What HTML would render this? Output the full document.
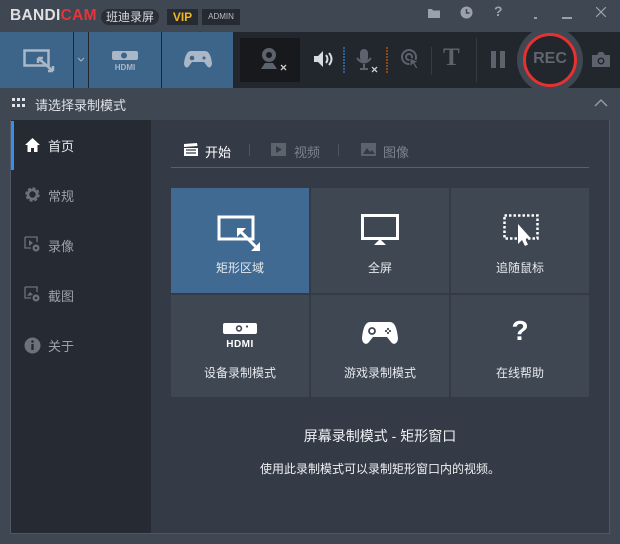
<!DOCTYPE html>
<html><head><meta charset="utf-8"><style>
*{margin:0;padding:0;box-sizing:border-box}
body{width:620px;height:544px;background:#3f4753;font-family:"Liberation Sans","Noto Sans CJK SC",sans-serif;position:relative;overflow:hidden;color:#fff}
.a{position:absolute}
.t{font-size:12px;color:#e8ebef;white-space:nowrap}
.side .t{color:#9aa1aa;font-size:13px}
.tile{position:absolute;background:#3f4753;width:138px}
.tile .lbl{position:absolute;left:0;right:0;text-align:center;top:71px;font-size:12px;color:#e6e9ee}
.tile svg{position:absolute;left:50%;transform:translateX(-50%);top:26px}
</style></head><body>
<!-- title bar -->
<div class="a" style="left:10px;top:7px;font-weight:bold;font-size:15.5px;letter-spacing:0.3px;color:#e0e0e0">BANDI<span style="color:#e8333a">CAM</span></div>
<div class="a" style="left:101px;top:9px;width:58px;height:16px;border-radius:8px;background:#2a2f37;font-size:12px;line-height:16px;text-align:center;color:#d8dbe0">班迪录屏</div>
<div class="a" style="left:167px;top:9px;width:31px;height:16px;background:#262b32;color:#f5b61a;font-weight:bold;font-size:12px;line-height:16px;text-align:center">VIP</div>
<div class="a" style="left:202px;top:9px;width:38px;height:16px;background:#262b32;color:#b8bdc4;font-size:8px;line-height:16px;text-align:center">ADMIN</div>
<svg class="a" style="left:427px;top:7px" width="14" height="12"><path d="M1 2h4l1 1.5h7V11H1z" fill="#9aa1aa"/></svg>
<svg class="a" style="left:460px;top:6px" width="13" height="13"><circle cx="6.5" cy="6.5" r="6" fill="#9aa1aa"/><path d="M6.5 3v4h3" stroke="#3f4753" stroke-width="1.5" fill="none"/></svg>
<div class="a" style="left:494px;top:3px;font-weight:bold;font-size:14px;color:#9aa1aa">?</div>
<div class="a" style="left:534px;top:17px;width:3px;height:2px;background:#9aa1aa"></div>
<div class="a" style="left:562px;top:17px;width:10px;height:2px;background:#9aa1aa"></div>
<svg class="a" style="left:596px;top:7px" width="10" height="10"><path d="M0 0L10 10M10 0L0 10" stroke="#9aa1aa" stroke-width="1.2"/></svg>
<!-- toolbar -->
<div class="a" style="left:0;top:32px;width:620px;height:56px;background:#22272e"></div>
<div class="a" style="left:0;top:32px;width:73px;height:56px;background:#3d6489"></div>
<div class="a" style="left:74px;top:32px;width:14px;height:56px;background:#3d6489"></div>
<div class="a" style="left:89px;top:32px;width:72px;height:56px;background:#3d6489"></div>
<div class="a" style="left:162px;top:32px;width:71px;height:56px;background:#3d6489"></div>
<svg class="a" style="left:23px;top:49px" width="33" height="24"><rect x="1.5" y="1.5" width="24" height="15" fill="none" stroke="#a9b7c7" stroke-width="2.5"/><path d="M15 9L30 22M15 9h5M15 9v5M30 22h-5M30 22v-5" stroke="#a9b7c7" stroke-width="2.5" fill="none"/></svg>
<svg class="a" style="left:77px;top:57px" width="8" height="5"><path d="M1 1l3 3 3-3" stroke="#a9b7c7" fill="none"/></svg>
<svg class="a" style="left:111px;top:49px" width="28" height="22"><rect x="1" y="2" width="26" height="9" rx="2" fill="#a9b7c7"/><circle cx="13" cy="6.5" r="3" fill="#3d6489"/><text x="14" y="21" text-anchor="middle" font-size="8" font-weight="bold" fill="#a9b7c7" font-family="Liberation Sans">HDMI</text></svg>
<svg class="a" style="left:184px;top:50px" width="28" height="19"><path d="M7 1h14c4 0 6 5 7 12 0 4-3 6-5 3l-3-4H8l-3 4c-2 3-5 1-5-3C1 6 3 1 7 1z" fill="#a9b7c7"/><circle cx="8" cy="8" r="2.3" fill="#3d6489"/><circle cx="20" cy="8" r="1.5" fill="#3d6489"/></svg>
<div class="a" style="left:240px;top:38px;width:60px;height:44px;background:#17191d"></div>
<svg class="a" style="left:258px;top:46px" width="36" height="30"><circle cx="11" cy="9" r="7" fill="#5c636c"/><circle cx="11" cy="9" r="3" fill="#17191d"/><path d="M3 23l4-6h8l4 6z" fill="#5c636c"/><path d="M23 19l5 5M28 19l-5 5" stroke="#ccc" stroke-width="1.3"/></svg>
<svg class="a" style="left:313px;top:50px" width="20" height="18"><path d="M1 6h4l5-5v16l-5-5H1z" fill="#d8dbe0"/><path d="M13 5q3 4 0 8M16 3q5 6 0 12" stroke="#d8dbe0" stroke-width="2" fill="none"/></svg>
<div class="a" style="left:343px;top:47px;width:2px;height:26px;background:repeating-linear-gradient(#2d5f9a 0 2px,transparent 2px 3px)"></div>
<svg class="a" style="left:356px;top:48px" width="30" height="27"><rect x="4" y="1" width="8" height="13" rx="4" fill="#5c636c"/><path d="M1 10q7 9 14 0M8 16v4M4 21h8" stroke="#5c636c" stroke-width="2" fill="none"/><path d="M16 19l5 5M21 19l-5 5" stroke="#ccc" stroke-width="1.3"/></svg>
<div class="a" style="left:386px;top:47px;width:2px;height:26px;background:repeating-linear-gradient(#8a4a12 0 2px,transparent 2px 3px)"></div>
<svg class="a" style="left:401px;top:49px" width="20" height="22"><circle cx="8" cy="8" r="7" fill="none" stroke="#5c636c" stroke-width="2"/><circle cx="8" cy="8" r="3" fill="none" stroke="#5c636c" stroke-width="2"/><path d="M9 9l9 4-4 1 3 5-2 1-3-5-3 3z" fill="#5c636c" stroke="#22272e" stroke-width="1"/></svg>
<div class="a" style="left:431px;top:47px;width:1px;height:28px;background:#353b44"></div>
<div class="a" style="left:443px;top:44px;font-family:'Liberation Serif',serif;font-weight:bold;font-size:25px;color:#5c636c">T</div>
<div class="a" style="left:476px;top:38px;width:1px;height:44px;background:#353b44"></div>
<div class="a" style="left:491px;top:51px;width:5px;height:17px;background:#5c636c"></div>
<div class="a" style="left:500px;top:51px;width:5px;height:17px;background:#5c636c"></div>
<div class="a" style="left:517px;top:27px;width:66px;height:66px;border-radius:50%;background:#3f4753"></div>
<div class="a" style="left:523px;top:33px;width:54px;height:54px;border-radius:50%;background:#22272e;border:3px solid #e5312f"></div>
<div class="a" style="left:523px;top:50px;width:54px;text-align:center;font-weight:bold;font-size:16px;color:#5f666f">REC</div>
<svg class="a" style="left:591px;top:51px" width="20" height="17"><path d="M1 4h5l2-3h4l2 3h5v12H1z" fill="#5c636c"/><circle cx="10" cy="10" r="3.5" fill="#22272e"/><circle cx="10" cy="10" r="2" fill="#5c636c"/></svg>
<!-- header -->
<svg class="a" style="left:12px;top:98px" width="13" height="11"><g fill="#e0e3e8"><rect x="0" y="0" width="3" height="3"/><rect x="5" y="0" width="3" height="3"/><rect x="10" y="0" width="3" height="3"/><rect x="0" y="6" width="3" height="3"/><rect x="5" y="6" width="3" height="3"/><rect x="10" y="6" width="3" height="3"/></g></svg>
<div class="a t" style="left:35px;top:95px;font-size:13px;color:#dfe3e8">请选择录制模式</div>
<svg class="a" style="left:594px;top:99px" width="14" height="8"><path d="M1 7l6-6 6 6" stroke="#9aa1aa" fill="none" stroke-width="1.3"/></svg>
<!-- panel -->
<div class="a" style="left:10px;top:120px;width:600px;height:414px;background:#4e5866"></div>
<div class="a" style="left:11px;top:120px;width:140px;height:413px;background:#262b33"></div>
<div class="a" style="left:151px;top:120px;width:458px;height:413px;background:#353b46"></div>
<div class="a" style="left:11px;top:121px;width:3px;height:49px;background:#3b8ee8"></div>
<div class="side">
<svg class="a" style="left:24px;top:137px" width="17" height="16"><path d="M8.5 1L1 8h2.5v7h3.5v-4h3v4h3.5V8H16z" fill="#fff"/></svg>
<div class="a t" style="left:48px;top:136px;color:#e8ebef">首页</div>
<svg class="a" style="left:24px;top:186px" width="17" height="17"><circle cx="8.5" cy="8.5" r="5.5" fill="none" stroke="#6b727b" stroke-width="3.5" stroke-dasharray="2.6 1.7"/><circle cx="8.5" cy="8.5" r="4.5" fill="none" stroke="#6b727b" stroke-width="2.5"/></svg>
<div class="a t" style="left:48px;top:186px">常规</div>
<svg class="a" style="left:24px;top:236px" width="17" height="17"><path d="M1 1h12v5M1 1v11h6" stroke="#6b727b" stroke-width="1.3" fill="none"/><path d="M5 4l4 3-4 3z" fill="#6b727b"/><circle cx="12" cy="12" r="3.5" fill="#6b727b"/><circle cx="12" cy="12" r="1.3" fill="#262b33"/></svg>
<div class="a t" style="left:48px;top:236px">录像</div>
<svg class="a" style="left:24px;top:286px" width="17" height="17"><path d="M1 1h12v5M1 1v11h6" stroke="#6b727b" stroke-width="1.3" fill="none"/><path d="M3 10l3-4 3 3z" fill="#6b727b"/><circle cx="12" cy="12" r="3.5" fill="#6b727b"/><circle cx="12" cy="12" r="1.3" fill="#262b33"/></svg>
<div class="a t" style="left:48px;top:286px">截图</div>
<svg class="a" style="left:24px;top:337px" width="17" height="17"><circle cx="8.5" cy="8.5" r="8" fill="#6b727b"/><rect x="7.3" y="7" width="2.4" height="6" fill="#262b33"/><circle cx="8.5" cy="4.5" r="1.3" fill="#262b33"/></svg>
<div class="a t" style="left:48px;top:336px">关于</div>
</div>
<!-- tabs -->
<svg class="a" style="left:183px;top:143px" width="16" height="14"><path d="M1 5h14v8H1z" fill="#fff"/><path d="M1 1l13-1 0.5 3L1 4z" fill="#fff"/><path d="M3 7h10M3 10h10" stroke="#353b46" stroke-width="1.3"/></svg>
<div class="a t" style="left:205px;top:142px;font-size:13px;color:#fff">开始</div>
<div class="a" style="left:249px;top:144px;width:1px;height:12px;background:#4e5562"></div>
<svg class="a" style="left:271px;top:143px" width="15" height="13"><rect width="15" height="13" fill="#5c636c"/><path d="M5 3l6 3.5-6 3.5z" fill="#353b46"/></svg>
<div class="a t" style="left:294px;top:142px;font-size:13px;color:#7c838d">视频</div>
<div class="a" style="left:338px;top:144px;width:1px;height:12px;background:#4e5562"></div>
<svg class="a" style="left:361px;top:143px" width="15" height="13"><rect width="15" height="13" fill="#5c636c"/><path d="M2 11l4-6 3 4 2-2 3 4z" fill="#353b46"/></svg>
<div class="a t" style="left:383px;top:142px;font-size:13px;color:#7c838d">图像</div>
<div class="a" style="left:171px;top:167px;width:418px;height:1px;background:#5a616c"></div>
<!-- tiles -->
<div class="tile" style="left:171px;top:188px;height:105px;background:#416a92">
<svg width="46" height="36" style="top:27px"><rect x="2" y="2" width="34" height="22" fill="none" stroke="#fff" stroke-width="3"/><path d="M22 15l18 18" stroke="#fff" stroke-width="3"/><path d="M20 13h9l-9 9z M43 36h-9l9-9z" fill="#fff"/></svg>
<div class="lbl">矩形区域</div></div>
<div class="tile" style="left:311px;top:188px;height:105px">
<svg width="38" height="32"><rect x="1.5" y="1.5" width="35" height="23" fill="none" stroke="#fff" stroke-width="3"/><path d="M13 31l6-6 6 6z" fill="#fff"/></svg>
<div class="lbl">全屏</div></div>
<div class="tile" style="left:451px;top:188px;height:105px">
<svg width="38" height="32" style="top:26px;margin-left:2px"><rect x="1.5" y="1.5" width="33" height="23" fill="none" stroke="#fff" stroke-width="2.5" stroke-dasharray="2.5 2"/><path d="M15 10v20l4-4 3 6 3-1.5-3-6h6z" fill="#fff"/></svg>
<div class="lbl">追随鼠标</div></div>
<div class="tile" style="left:171px;top:295px;height:102px">
<svg width="36" height="26" style="top:27px"><rect x="1" y="1" width="34" height="11" rx="2" fill="#fff"/><circle cx="17" cy="6.5" r="3.2" fill="#3f4753"/><circle cx="17" cy="6.5" r="1.6" fill="#fff"/><circle cx="25" cy="4.5" r="1.1" fill="#3f4753"/><text x="18" y="25" text-anchor="middle" font-size="10" font-weight="bold" fill="#fff" font-family="Liberation Sans" letter-spacing="0.5">HDMI</text></svg>
<div class="lbl" style="top:69px">设备录制模式</div></div>
<div class="tile" style="left:311px;top:295px;height:102px">
<svg width="36" height="24" style="top:26px"><path d="M8 1h20c5 0 7 7 8 16 0 5-4 8-7 4l-4-5H11l-4 5c-3 4-7 1-7-4C1 8 3 1 8 1z" fill="#fff"/><circle cx="10" cy="10" r="3" fill="none" stroke="#3f4753" stroke-width="1.8"/><g fill="#3f4753"><circle cx="26" cy="8" r="1.1"/><circle cx="26" cy="12" r="1.1"/><circle cx="24" cy="10" r="1.1"/><circle cx="28" cy="10" r="1.1"/></g></svg>
<div class="lbl" style="top:69px">游戏录制模式</div></div>
<div class="tile" style="left:451px;top:295px;height:102px">
<div class="a" style="left:0;right:0;top:20px;text-align:center;font-weight:bold;font-size:28px;color:#fff">?</div>
<div class="lbl" style="top:69px">在线帮助</div></div>
<div class="a t" style="left:151px;width:458px;text-align:center;top:426px;font-size:14px;color:#eef0f3">屏幕录制模式 - 矩形窗口</div>
<div class="a t" style="left:151px;width:458px;text-align:center;top:460px;color:#eef0f3">使用此录制模式可以录制矩形窗口内的视频。</div>
</body></html>
